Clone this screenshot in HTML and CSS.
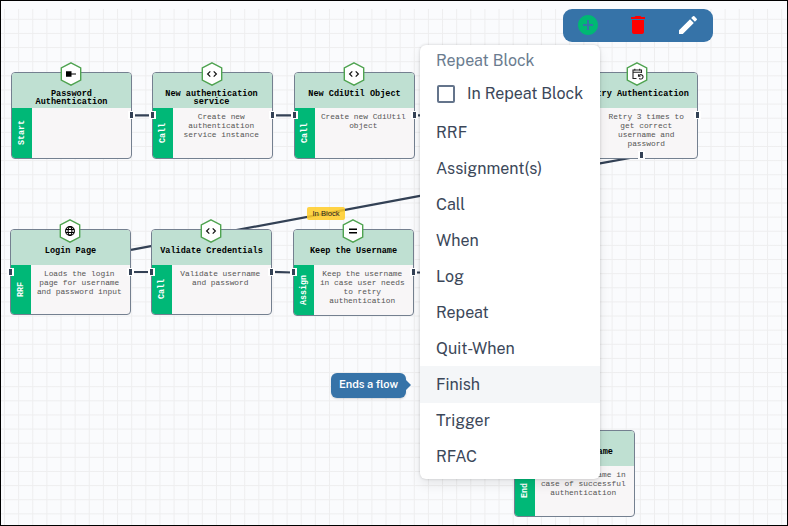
FILE: index.html
```html
<!DOCTYPE html>
<html lang="en">
<head>
<meta charset="utf-8">
<title>Flow editor</title>
<link rel="stylesheet" href="styles.css">
</head>
<body>
<svg class="defs" width="0" height="0">
  <symbol id="hex" viewBox="0 0 22 24"><path d="M11 .9 20.700 6v12L11 23.100 1.300 18V6z" fill="#fff" stroke="#4fa350" stroke-width="1.400"/></symbol>
  <symbol id="code" viewBox="0 0 22 24"><path d="M9.300 9.300 6.600 12 9.300 14.700M12.700 9.300 15.400 12 12.700 14.700" fill="none" stroke="#111" stroke-width="1.200"/></symbol>
  <symbol id="start" viewBox="0 0 22 24"><path d="M6 9.200h5.500v2.200H16v1.200h-4.500v2.200H6z" fill="#000"/></symbol>
  <symbol id="globe" viewBox="0 0 22 24"><g fill="none" stroke="#000" stroke-width="1.100"><circle cx="11" cy="12" r="4.400"/><ellipse cx="11" cy="12" rx="1.900" ry="4.400"/><path d="M6.900 10.500h8.200M6.900 13.500h8.200"/></g></symbol>
  <symbol id="equal" viewBox="0 0 22 24"><path d="M7 10.300h8M7 13.700h8" stroke="#000" stroke-width="1.400"/></symbol>
  <symbol id="repeat" viewBox="0 0 22 24"><path d="M10.500 16.500H7v-8.500h8.500v3M7 10.300h8.500M8.800 6.800v2M13.700 6.800v2M12.500 12.300v2h2M12.800 14a2.200 2.200 0 1 1 .4 2.300" fill="none" stroke="#222" stroke-width="1.100"/></symbol>
</svg>
<main class="board">
  <svg class="edges" width="788" height="526" viewBox="0 0 788 526">
    <path d="M131 115.300H153M273 115.300H295M415 115.300H440M131 272H152M272 271.800 293 272.500M413 272.500H440M131 249.800 420 195.800 600 163.300 641 156"/>
  </svg>
  <span class="edge-label">In Block</span>

  <article class="node n1">
    <svg class="badge"><use href="#hex"/><use href="#start"/></svg>
    <h2>Password<br>Authentication</h2>
    <div class="body"><b>Start</b><p></p></div>
    <i class="port out"></i>
  </article>
  <article class="node n2">
    <svg class="badge"><use href="#hex"/><use href="#code"/></svg>
    <h2>New authentication<br>service</h2>
    <div class="body"><b>Call</b><p>Create new<br>authentication<br>service instance</p></div>
    <i class="port in"></i><i class="port out"></i>
  </article>
  <article class="node n3">
    <svg class="badge"><use href="#hex"/><use href="#code"/></svg>
    <h2>New CdiUtil Object</h2>
    <div class="body"><b>Call</b><p>Create new CdiUtil<br>object</p></div>
    <i class="port in"></i><i class="port out"></i>
  </article>
  <article class="node n4">
    <svg class="badge"><use href="#hex"/><use href="#repeat"/></svg>
    <h2>Retry Authentication</h2>
    <div class="body"><b>Repeat</b><p>Retry 3 times to<br>get correct<br>username and<br>password</p></div>
    <i class="port out"></i><i class="port down"></i>
  </article>
  <article class="node n5">
    <svg class="badge"><use href="#hex"/><use href="#globe"/></svg>
    <h2>Login Page</h2>
    <div class="body"><b>RRF</b><p>Loads the login<br>page for username<br>and password input</p></div>
    <i class="port in"></i><i class="port out"></i>
  </article>
  <article class="node n6">
    <svg class="badge"><use href="#hex"/><use href="#code"/></svg>
    <h2>Validate Credentials</h2>
    <div class="body"><b>Call</b><p>Validate username<br>and password</p></div>
    <i class="port in"></i><i class="port out"></i>
  </article>
  <article class="node n7">
    <svg class="badge"><use href="#hex"/><use href="#equal"/></svg>
    <h2>Keep the Username</h2>
    <div class="body"><b>Assign</b><p>Keep the username<br>in case user needs<br>to retry<br>authentication</p></div>
    <i class="port in"></i><i class="port out"></i>
  </article>
  <article class="node n8">
    <h2>Return Username</h2>
    <div class="body"><b>End</b><p>Return username in<br>case of successful<br>authentication</p></div>
  </article>

  <nav class="toolbar">
    <svg viewBox="0 0 24 24"><path fill="#00b873" d="M12 2C6.480 2 2 6.480 2 12s4.480 10 10 10 10-4.480 10-10S17.520 2 12 2zm5 11h-4v4h-2v-4H7v-2h4V7h2v4h4v2z"/></svg>
    <svg viewBox="0 0 24 24"><path fill="#f00" d="M6 19c0 1.100.9 2 2 2h8c1.100 0 2-.9 2-2V7H6v12zM19 4h-3.500l-1-1h-5l-1 1H5v2h14V4z"/></svg>
    <svg viewBox="0 0 24 24"><path fill="#fff" d="M3 17.250V21h3.750L17.810 9.940l-3.750-3.750L3 17.250zM20.710 7.040a1 1 0 0 0 0-1.410l-2.340-2.340a1 1 0 0 0-1.410 0l-1.830 1.830 3.750 3.750 1.830-1.830z"/></svg>
  </nav>

  <div class="tooltip">Ends a flow</div>

  <ul class="menu">
    <li class="heading">Repeat Block</li>
    <li class="check"><span class="box"></span>In Repeat Block</li>
    <li>RRF</li>
    <li>Assignment(s)</li>
    <li>Call</li>
    <li>When</li>
    <li>Log</li>
    <li>Repeat</li>
    <li>Quit-When</li>
    <li class="active">Finish</li>
    <li>Trigger</li>
    <li>RFAC</li>
  </ul>
</main>
</body>
</html>
```
FILE: styles.css
```css
* { box-sizing: border-box; }
body { margin: 0; }
.defs { position: absolute; }

.board {
  position: relative;
  width: 788px;
  height: 526px;
  overflow: hidden;
  background: #fafbfd;
  font-family: "Public Sans", Inter, "Liberation Sans", sans-serif;
}
.board::before {
  content: "";
  position: absolute;
  inset: 9px 0 0;
  background:
    repeating-linear-gradient(to right, transparent 0 3.500px, #eeeeef 4.500px, transparent 5.500px 14.130px),
    repeating-linear-gradient(to bottom, transparent 0 9.300px, #eeeeef 10.300px, transparent 11.300px 14.130px);
}
.board::after {
  content: "";
  position: absolute;
  inset: 0;
  border: 1px solid #000;
  z-index: 9;
}

.edges { position: absolute; left: 0; top: 0; }
.edges path { fill: none; stroke: #334155; stroke-width: 2.200; }
.edge-label {
  position: absolute;
  left: 307px;
  top: 207px;
  width: 38px;
  height: 13px;
  border-radius: 2px;
  background: rgba(255, 204, 41, .87);
  color: #222;
  font: 400 7.600px/13px "Liberation Sans", sans-serif;
  text-align: center;
}

.node {
  position: absolute;
  display: flex;
  flex-direction: column;
  width: 121px;
  height: 87px;
  border: 1px solid #748090;
  border-radius: 4px;
  background: #f8f6f7;
  font-family: "Liberation Mono", monospace;
}
.n1 { left: 11px; top: 72px; }
.n2 { left: 152px; top: 72px; }
.n3 { left: 294px; top: 72px; }
.n4 { left: 577px; top: 72px; }
.n5 { left: 10px; top: 229px; height: 86px; }
.n6 { left: 151px; top: 229px; height: 86px; }
.n7 { left: 293px; top: 229px; }
.n8 { left: 514px; top: 430px; }
.node h2 {
  flex: 0 0 35px;
  margin: 0;
  padding-top: 16.500px;
  border-radius: 3px 3px 0 0;
  background: #bfe0d2;
  color: #000;
  font-size: 8.550px;
  line-height: 8.400px;
  text-align: center;
  white-space: nowrap;
}
.n2 h2 { padding-right: 2px; }
.body { display: flex; flex: 1; min-height: 0; }
.body b {
  width: 20px;
  background: #00b877;
  color: #fff;
  font-size: 8.300px;
  line-height: 20px;
  text-align: center;
  writing-mode: vertical-rl;
  transform: rotate(180deg);
  border-radius: 0 3px 0 0;
}
.body p {
  flex: 1;
  margin: 0;
  padding: 4px 2.500px 0 0;
  color: #555;
  font-size: 7.850px;
  line-height: 9px;
  text-align: center;
  white-space: nowrap;
}
.badge {
  position: absolute;
  left: 48.300px;
  top: -11.500px;
  width: 22px;
  height: 24px;
}
.port {
  position: absolute;
  top: 38.400px;
  width: 7px;
  height: 8px;
  border: solid #fff;
  border-width: 1px 2px;
  background: #334155;
}
.port.in { left: -4px; }
.port.out { right: -4px; }
.port.down { top: 78px; left: 60px; }

.toolbar {
  position: absolute;
  left: 562.500px;
  top: 9px;
  width: 150px;
  height: 33px;
  display: flex;
  justify-content: space-around;
  align-items: center;
  border-radius: 9px;
  background: #3673a8;
}
.toolbar svg { width: 24px; height: 24px; margin-top: -1px; }

.tooltip {
  position: absolute;
  left: 331px;
  top: 373px;
  width: 75px;
  height: 25px;
  border-radius: 6px;
  background: #3673a8;
  color: #fff;
  font-size: 11px;
  font-weight: 600;
  line-height: 23px;
  text-align: center;
  box-shadow: 0 1px 2px rgba(0, 0, 0, .15);
}
.tooltip::after {
  content: "";
  position: absolute;
  left: 75px;
  top: 7px;
  border: 5.500px solid transparent;
  border-left-color: #3673a8;
  border-right: 0;
}

.menu {
  position: absolute;
  left: 420px;
  top: 45px;
  width: 180px;
  height: 434px;
  margin: 0;
  padding: 0;
  list-style: none;
  border-radius: 6px;
  background: #fff;
  color: #3b4759;
  font-size: 16px;
  box-shadow: 0 0 3px rgba(0, 0, 0, .18), 0 6px 12px rgba(0, 0, 0, .08);
}
.menu li {
  display: flex;
  align-items: center;
  height: 36px;
  padding-left: 16px;
  white-space: nowrap;
}
.menu .heading { height: 29px; padding-top: 1px; color: #6b7c8f; }
.menu .check { height: 40px; padding-left: 17px; padding-bottom: 1px; gap: 12px; }
.menu .active { background: #f4f6f8; box-shadow: 0 1px #f4f6f8; }
.box { width: 18px; height: 18px; border: 2px solid #64748b; border-radius: 2px; }
```
